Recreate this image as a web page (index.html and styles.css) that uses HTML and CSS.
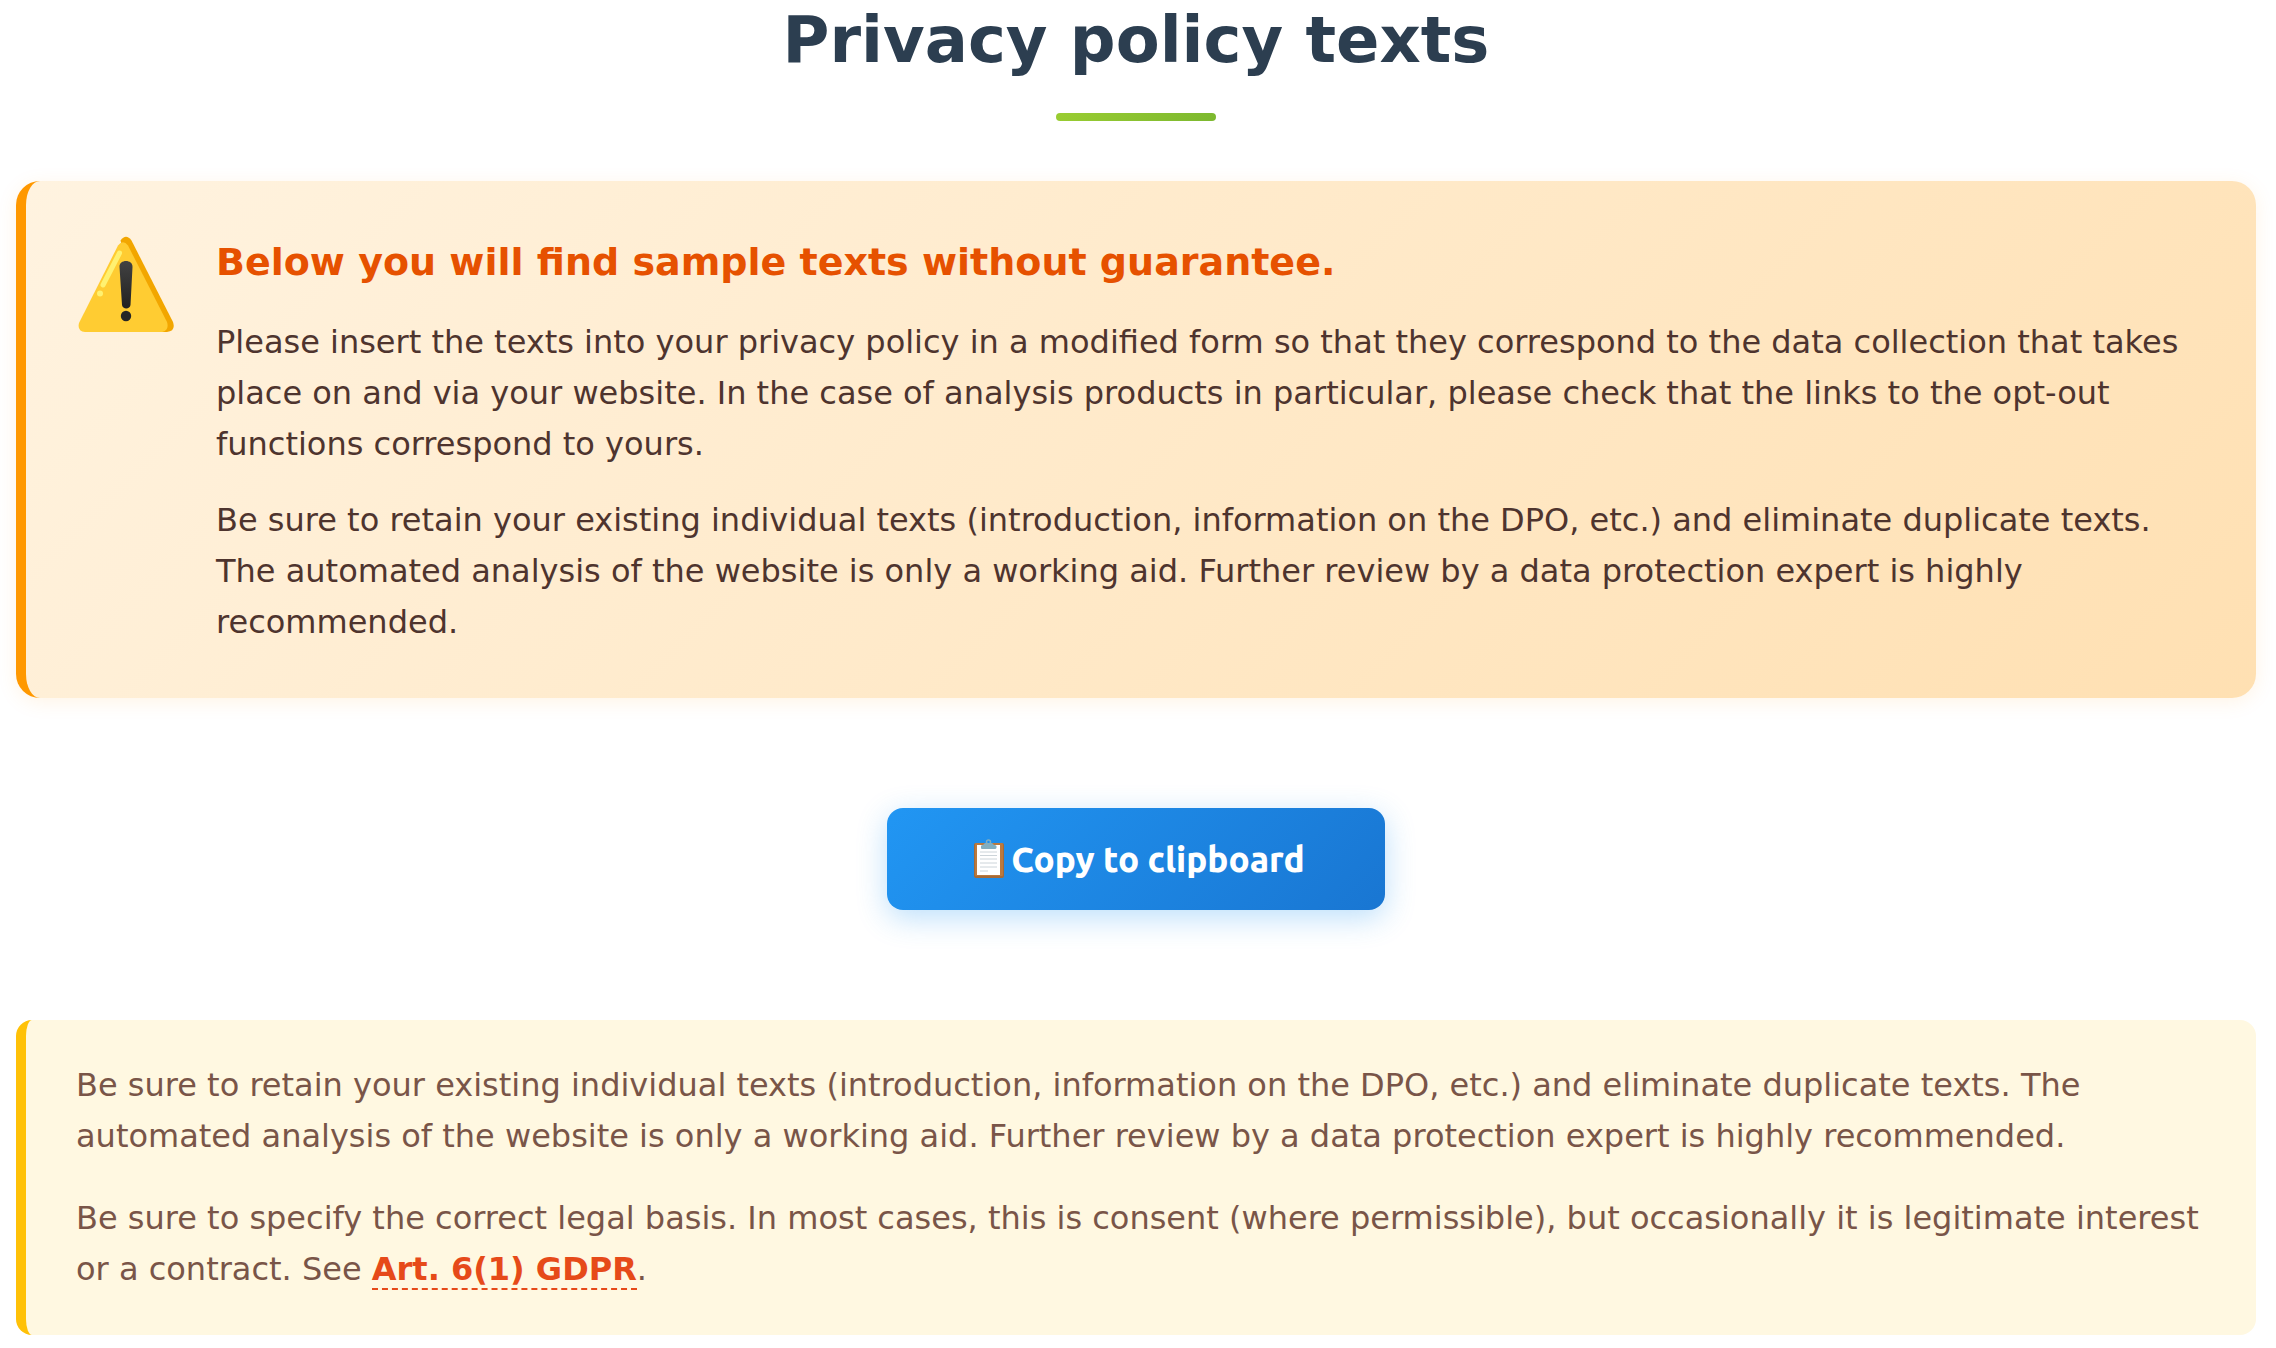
FILE: index.html
```html
<!DOCTYPE html>
<html lang="en">
<head>
    <meta charset="UTF-8">
    <meta name="viewport" content="width=device-width, initial-scale=1.0">
    <title>Privacy policy texts</title>
    <link rel="stylesheet" href="styles.css">
</head>
<body>
    <main class="container">
        <h1 class="page-title">Privacy policy texts</h1>

        <section class="warning-box">
            <svg class="warning-icon" viewBox="0 0 100 100" aria-hidden="true">
                <path d="M44.500 5.500 Q50 -2 55.500 5.500 L97 87 Q100 96 91 97 L70 97 Z" fill="#f2a600"/>
                <path d="M42 10.500 Q47 4 52 10.500 L91 87 Q93.500 95 86 97 L9 97 Q1 96 3 88 Z" fill="#ffcc32"/>
                <path d="M43.500 18 L27 50" stroke="#fff170" stroke-width="5" stroke-linecap="round"/>
                <circle cx="24" cy="58.500" r="3" fill="#fff170"/>
                <path d="M43.500 32 C43 24 57 24 56.500 32 L54.500 70 C54 74.500 46.500 74.500 46 70 Z" fill="url(#mark)"/>
                <circle cx="50" cy="81" r="5.200" fill="#262626"/>
                <defs>
                    <linearGradient id="mark" x1="0" y1="0" x2="0" y2="1">
                        <stop offset="0" stop-color="#424242"/>
                        <stop offset="1" stop-color="#212121"/>
                    </linearGradient>
                </defs>
            </svg>
            <div class="warning-content">
                <h2>Below you will find sample texts without guarantee.</h2>
                <p>Please insert the texts into your privacy policy in a modified form so that they correspond to the data collection that takes place on and via your website. In the case of analysis products in particular, please check that the links to the opt-out functions correspond to yours.</p>
                <p>Be sure to retain your existing individual texts (introduction, information on the DPO, etc.) and eliminate duplicate texts. The automated analysis of the website is only a working aid. Further review by a data protection expert is highly recommended.</p>
            </div>
        </section>

        <div class="copy-section">
            <button type="button" class="copy-button">
                <svg class="copy-icon" viewBox="0 0 44 42" aria-hidden="true">
                    <rect x="7" y="5" width="30" height="35" rx="2" fill="#a56a38"/>
                    <rect x="8" y="5" width="28" height="33" rx="1" fill="#ba793e"/>
                    <rect x="10" y="7" width="23" height="30" fill="#fff"/>
                    <path d="M13 14h17M13 17.500h17M13 21h17M13 25h17M13 29h17M13 33h8" stroke="#ccd4d9"/>
                    <circle cx="21.500" cy="4" r="2" fill="none" stroke="#82aebf" stroke-width="1.500"/>
                    <path d="M14 8Q14 7 16 7L18 5H25L27 7Q29 7 29.500 8V10Q29 11 28 11H15Q14 11 14 10Z" fill="#82aebf"/>
                </svg>
                <span>Copy to clipboard</span>
            </button>
        </div>

        <section class="note-box">
            <p>Be sure to retain your existing individual texts (introduction, information on the DPO, etc.) and eliminate duplicate texts. The automated analysis of the website is only a working aid. Further review by a data protection expert is highly recommended.</p>
            <p>Be sure to specify the correct legal basis. In most cases, this is consent (where permissible), but occasionally it is legitimate interest or a contract. See <a href="#gdpr">Art. 6(1) GDPR</a>.</p>
        </section>
    </main>
</body>
</html>
```
FILE: styles.css
```css
* {
    box-sizing: border-box;
}

body {
    margin: 0;
    background-color: #fff;
    font-family: "DejaVu Sans", sans-serif;
    font-size: 32px;
    line-height: 1.6;
}

.container {
    padding: 0 20px 14px 16px;
}

.page-title {
    margin: 0 0 60px;
    padding-top: 3px;
    color: #2c3e50;
    font-size: 64px;
    line-height: 75px;
    text-align: center;
}

.page-title::after {
    content: "";
    display: block;
    width: 160px;
    height: 8px;
    margin: 35px auto 0;
    border-radius: 4px;
    background: linear-gradient(135deg, #9acd32, #7cb82f);
}

.warning-box {
    display: flex;
    align-items: flex-start;
    gap: 40px;
    padding: 50px;
    border-left: 10px solid #ff9800;
    border-radius: 24px;
    background: linear-gradient(135deg, #fff3e0, #ffe0b2);
    box-shadow: 0 4px 20px rgba(255, 152, 0, 0.1);
}

.warning-icon {
    flex: none;
    width: 100px;
    height: 100px;
    margin-top: 4px;
}

.warning-content h2 {
    margin: 0 0 24px;
    color: #e65100;
    font-size: 38px;
    line-height: 62px;
}

.warning-content p {
    margin: 0 0 24px;
    color: #4e342e;
}

.copy-section {
    margin: 110px 0;
    text-align: center;
}

.copy-button {
    display: inline-flex;
    align-items: center;
    padding: 30px 80px;
    border: none;
    border-radius: 16px;
    background: linear-gradient(135deg, #2196f3, #1976d2);
    box-shadow: 0 8px 30px rgba(33, 150, 243, 0.3);
    color: #fff;
    font-family: Ubuntu, "Open Sans", sans-serif;
    font-size: 35px;
    font-weight: 800;
    line-height: 42px;
    vertical-align: top;
    cursor: pointer;
}

.copy-icon {
    width: 44px;
    height: 42px;
}

.note-box {
    padding: 40px 50px;
    border-left: 10px solid #ffc107;
    border-radius: 16px;
    background-color: #fff8e1;
    color: #795548;
}

.note-box p {
    margin: 0 0 30px;
}

.warning-content p:last-child,
.note-box p:last-child {
    margin-bottom: 0;
}

.note-box a {
    border-bottom: 2px dashed #e64a19;
    color: #e64a19;
    font-weight: bold;
    text-decoration: none;
}
```
